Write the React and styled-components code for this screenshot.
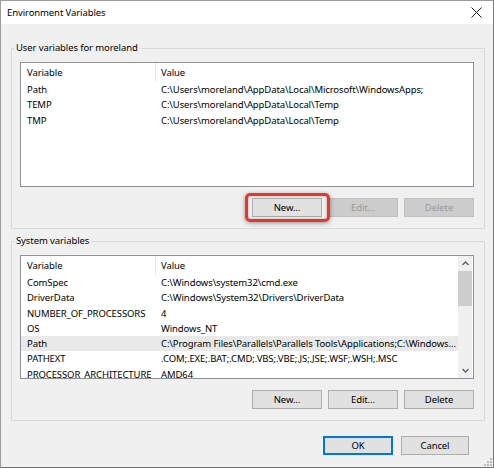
import styled, { createGlobalStyle, css } from "styled-components";

const GlobalStyle = createGlobalStyle`
  html, body {
    margin: 0;
    padding: 0;
    background: #ffffff;
  }
  body {
    font-family: "Noto Sans", "Open Sans", sans-serif;
    font-size: 9.5px;
    letter-spacing: -0.1px;
    color: #000;
  }
`;

const userVars = [
  { name: "Path", value: "C:\\Users\\moreland\\AppData\\Local\\Microsoft\\WindowsApps;" },
  { name: "TEMP", value: "C:\\Users\\moreland\\AppData\\Local\\Temp" },
  { name: "TMP", value: "C:\\Users\\moreland\\AppData\\Local\\Temp" },
];

const systemVars = [
  { name: "ComSpec", value: "C:\\Windows\\system32\\cmd.exe" },
  { name: "DriverData", value: "C:\\Windows\\System32\\Drivers\\DriverData" },
  { name: "NUMBER_OF_PROCESSORS", value: "4" },
  { name: "OS", value: "Windows_NT" },
  {
    name: "Path",
    value: "C:\\Program Files\\Parallels\\Parallels Tools\\Applications;C:\\Windows...",
    selected: true,
  },
  { name: "PATHEXT", value: ".COM;.EXE;.BAT;.CMD;.VBS;.VBE;.JS;.JSE;.WSF;.WSH;.MSC" },
  { name: "PROCESSOR_ARCHITECTURE", value: "AMD64" },
];

function VarList({ rows, height, scroll }) {
  return (
    <ListBox style={{ height }}>
      <ListInner>
        <HeaderRow>
          <HeaderCell $divider>Variable</HeaderCell>
          <HeaderCell>Value</HeaderCell>
        </HeaderRow>
        {rows.map((r) => (
          <Row key={r.name} $selected={r.selected}>
            <NameCell>{r.name}</NameCell>
            <ValueCell>{r.value}</ValueCell>
          </Row>
        ))}
      </ListInner>
      {scroll && (
        <ScrollBar>
          <Arrow>
            <svg width="7" height="5" viewBox="0 0 7 5">
              <path d="M0.5 4 L3.5 1 L6.5 4" fill="none" stroke="#5f5f5f" strokeWidth="1.3" />
            </svg>
          </Arrow>
          <Track>
            <Thumb />
          </Track>
          <Arrow>
            <svg width="7" height="5" viewBox="0 0 7 5">
              <path d="M0.5 1 L3.5 4 L6.5 1" fill="none" stroke="#5f5f5f" strokeWidth="1.3" />
            </svg>
          </Arrow>
        </ScrollBar>
      )}
    </ListBox>
  );
}

export default function App() {
  return (
    <>
      <GlobalStyle />
      <Window>
        <TitleBar>
          <Title>Environment Variables</Title>
          <CloseButton>
            <svg width="11" height="11" viewBox="0 0 11 11">
              <path d="M0.5 0.5 L10.5 10.5 M10.5 0.5 L0.5 10.5" stroke="#1a1a1a" strokeWidth="1" />
            </svg>
          </CloseButton>
        </TitleBar>
        <Body>
          <GroupBox>
            <Legend>User variables for moreland</Legend>
            <VarList rows={userVars} height={125} />
            <ButtonRow>
              <Highlighted>
                <Button>New...</Button>
                <RedRing />
              </Highlighted>
              <Button disabled>Edit...</Button>
              <Button disabled>Delete</Button>
            </ButtonRow>
          </GroupBox>
          <GroupBox $second>
            <Legend>System variables</Legend>
            <VarList rows={systemVars} height={124} scroll />
            <ButtonRow>
              <Button>New...</Button>
              <Button>Edit...</Button>
              <Button>Delete</Button>
            </ButtonRow>
          </GroupBox>
          <DialogButtons>
            <Button $default>OK</Button>
            <Button $wide>Cancel</Button>
          </DialogButtons>
        </Body>
        <Grip>
          <svg width="9" height="9" viewBox="0 0 9 9">
            {[
              [7, 1],
              [4, 4],
              [7, 4],
              [1, 7],
              [4, 7],
              [7, 7],
            ].map(([x, y]) => (
              <rect key={`${x}-${y}`} x={x} y={y} width="2" height="2" fill="#b8b8b8" />
            ))}
          </svg>
        </Grip>
      </Window>
    </>
  );
}

const Window = styled.div`
  position: relative;
  box-sizing: border-box;
  width: 494px;
  height: 468px;
  border: 1px solid #9b9b9b;
  border-right-color: #7a7a7a;
  border-bottom-color: #6f6f6f;
  background: #f0f0f0;
  display: flex;
  flex-direction: column;
`;

const TitleBar = styled.div`
  height: 23px;
  background: #ffffff;
  display: flex;
  align-items: center;
  justify-content: space-between;
  padding: 0 6px 0 6px;
`;

const Title = styled.span`
  line-height: 1;
`;

const CloseButton = styled.span`
  display: flex;
  align-items: center;
  justify-content: center;
  width: 20px;
  height: 20px;
  margin-right: 1px;
`;

const Body = styled.div`
  flex: 1;
  display: flex;
  flex-direction: column;
  padding: 16px 8px 0 10px;
`;

const GroupBox = styled.fieldset`
  margin: ${(p) => (p.$second ? "4px" : "0")} 0 0 0;
  padding: 6px 10px 11px 8px;
  border: 1px solid #dadada;
  min-width: 0;
`;

const Legend = styled.legend`
  margin-left: -6px;
  padding: 0 2px;
  line-height: 16px;
`;

const ListBox = styled.div`
  box-sizing: border-box;
  display: flex;
  background: #ffffff;
  border: 1px solid #8f9196;
  overflow: hidden;
`;

const ListInner = styled.div`
  flex: 1;
  min-width: 0;
`;

const HeaderRow = styled.div`
  display: grid;
  grid-template-columns: 135px 1fr;
  height: 19px;
  align-items: center;
`;

const HeaderCell = styled.div`
  height: 100%;
  display: flex;
  align-items: center;
  padding-left: ${(p) => (p.$divider ? "6px" : "5px")};
  ${(p) =>
    p.$divider &&
    css`
      border-right: 1px solid #e6e6e6;
    `}
`;

const Row = styled.div`
  display: grid;
  grid-template-columns: 135px 1fr;
  height: 15.25px;
  align-items: center;
  background: ${(p) => (p.$selected ? "#e9e9e9" : "transparent")};
`;

const NameCell = styled.div`
  padding-left: 6px;
  white-space: nowrap;
  overflow: hidden;
`;

const ValueCell = styled.div`
  padding-left: 5px;
  white-space: nowrap;
  overflow: hidden;
`;

const ScrollBar = styled.div`
  width: 14px;
  margin: 0 1px 0 0;
  display: flex;
  flex-direction: column;
  background: #f0f0f0;
`;

const Arrow = styled.div`
  height: 15px;
  display: flex;
  align-items: center;
  justify-content: center;
`;

const Track = styled.div`
  flex: 1;
`;

const Thumb = styled.div`
  height: 35px;
  background: #cdcdcd;
`;

const ButtonRow = styled.div`
  display: flex;
  justify-content: flex-end;
  gap: 6px;
  margin-top: 11px;
`;

const Button = styled.button`
  box-sizing: border-box;
  width: ${(p) => (p.$wide ? "68px" : "70px")};
  height: 19px;
  padding: 0;
  font-family: inherit;
  font-size: inherit;
  letter-spacing: inherit;
  color: #000;
  background: #e1e1e1;
  border: 1px solid #adadad;
  border-radius: 0;
  ${(p) =>
    p.$default &&
    css`
      border-color: #0078d7;
      box-shadow: inset 0 0 0 1px #0078d7;
    `}
  &:disabled {
    color: #9a9a9a;
    background: #cccccc;
    border-color: #bfbfbf;
  }
`;

const Highlighted = styled.div`
  position: relative;
  display: flex;
`;

const RedRing = styled.span`
  position: absolute;
  left: -7px;
  right: -8px;
  top: -5px;
  bottom: -5px;
  border: 3px solid #e8372a;
  border-radius: 5px;
  box-shadow: 0 1px 4px rgba(0, 0, 0, 0.4), inset 0 0 3px rgba(0, 0, 0, 0.3);
  pointer-events: none;
`;

const DialogButtons = styled.div`
  display: flex;
  justify-content: flex-end;
  gap: 8px;
  margin-top: 15px;
  padding-right: 16px;
`;

const Grip = styled.div`
  position: absolute;
  right: 1px;
  bottom: 1px;
  line-height: 0;
`;
